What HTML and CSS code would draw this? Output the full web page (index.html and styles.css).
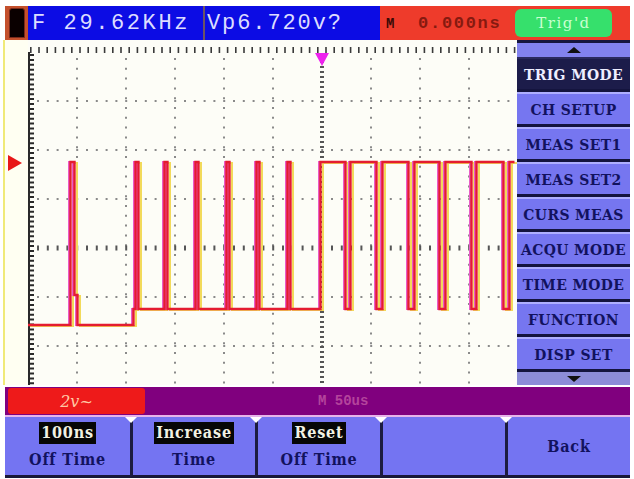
FILE: index.html
```html
<!DOCTYPE html>
<html lang="en">
<head>
  <meta charset="UTF-8" />
  <title>Scope - Trigger Mode</title>
  <link rel="stylesheet" href="styles.css">
</head>
<body>
  <div class="scope">

    <!-- top status line -->
    <header class="topbar">
      <div class="battery"><span class="cell"></span></div>
      <div class="readout freq">F 29.62KHz</div>
      <div class="readout vp">Vp6.720v?</div>
      <div class="timebase">
        <span class="delay"><b class="m">M</b>0.000ns</span>
        <span class="trig">Trig'd</span>
      </div>
    </header>

    <main class="middle">
      <div class="gutter">
        <svg class="gutter-svg" width="23" height="345" viewBox="5 40 23 345">
          <polygon points="8,155 8,171 22,163" fill="#e81818"/>
        </svg>
      </div>

      <!-- graticule + trace, drawn in screen coordinates -->
      <svg class="graticule" width="489" height="345" viewBox="28 40 489 345">
        <defs>
          <path id="trace" d="M29 326H72V163H76V296H79V326H135V310H137V163H140V310H166V163H169V310H197V163H200V310H228V163H231V310H258V163H261V310H289V163H292V310H322V163H347V310H352V163H378V310H384V163H410V310H416V163H441V310H447V163H473V310H478V163H505V310H511V163H516"/>
        </defs>
        <rect x="28" y="40" width="489" height="345" fill="#fdfdf7"/>
        <line x1="30" y1="50" x2="516" y2="50" stroke="#3a3a3a" stroke-width="6" stroke-dasharray="1.6 6.6"/>
        <line x1="29" y1="52" x2="29" y2="385" stroke="#2a2a2a" stroke-width="2"/>
        <line x1="31.5" y1="54" x2="31.5" y2="385" stroke="#2a2a2a" stroke-width="5" stroke-dasharray="2 2.9"/>
        <path d="M77 58V385M126 58V385M175 58V385M224 58V385M273 58V385M371 58V385M420 58V385M469 58V385"
              stroke="#8a8a8a" stroke-width="2" stroke-dasharray="2 7.8"/>
        <path d="M37 101H516M37 150H516M37 199H516M37 297H516M37 346H516"
              stroke="#8a8a8a" stroke-width="2" stroke-dasharray="2 7.8"/>
        <line x1="322" y1="56" x2="322" y2="385" stroke="#555" stroke-width="4" stroke-dasharray="2 3"/>
        <line x1="37" y1="248" x2="516" y2="248" stroke="#555" stroke-width="5" stroke-dasharray="2 7.8"/>

        <g fill="none" stroke-width="2" stroke-linejoin="miter">
          <use href="#trace" stroke="#f2da5a" transform="translate(1 0)"/>
          <use href="#trace" stroke="#ea5cc8" transform="translate(-3 -1)"/>
          <use href="#trace" stroke="#e41c30" stroke-width="2.4" transform="translate(-1.5 -1)"/>
        </g>
        <polygon points="315,53 329,53 322,66" fill="#ee22ee"/>
      </svg>

      <nav class="menu">
        <div class="menu-arrow"><span class="tri up"></span></div>
        <div class="menu-item active">TRIG MODE</div>
        <div class="menu-item">CH SETUP</div>
        <div class="menu-item">MEAS SET1</div>
        <div class="menu-item">MEAS SET2</div>
        <div class="menu-item">CURS MEAS</div>
        <div class="menu-item">ACQU MODE</div>
        <div class="menu-item">TIME MODE</div>
        <div class="menu-item">FUNCTION</div>
        <div class="menu-item">DISP SET</div>
        <div class="menu-arrow bottom"><span class="tri down"></span></div>
      </nav>
    </main>

    <div class="status">
      <span class="ch1">2v~</span>
      <span class="tb">M 50us</span>
    </div>

    <footer class="softkeys">
      <div class="key"><span class="hl">100ns</span><span>Off Time</span></div>
      <div class="key"><span class="hl">Increase</span><span>Time</span></div>
      <div class="key"><span class="hl">Reset</span><span>Off Time</span></div>
      <div class="key"></div>
      <div class="key single"><span>Back</span></div>
    </footer>

  </div>
</body>
</html>
```

FILE: styles.css
```css
body {
  margin: 0;
  background: #ffffff;
  width: 634px;
  height: 479px;
  overflow: hidden;
}

.scope {
  width: 625px;
  padding: 6px 0 0 5px;
  font-family: "Liberation Mono", monospace;
  font-weight: bold;
}

/* ---------- top bar ---------- */
.topbar {
  display: flex;
  height: 34px;
}

.battery {
  width: 23px;
  background: #c4502c;
  padding: 2px 3px 2px 4px;
  box-sizing: border-box;
  display: flex;
}

.battery .cell {
  flex: 1;
  background: #0a0000;
  border: 1px solid #7a2a1a;
  border-radius: 3px 3px 0 0;
}

.readout {
  background: #0c0ce4;
  color: #dcdcff;
  font-weight: normal;
  font-size: 22px;
  letter-spacing: 2.6px;
  display: flex;
  align-items: center;
  white-space: nowrap;
  overflow: hidden;
  box-sizing: border-box;
}

.freq {
  width: 175px;
  padding-left: 4px;
}

.vp {
  width: 177px;
  border-left: 2px solid #6c5464;
  padding-left: 2px;
  letter-spacing: 1.9px;
}

.timebase {
  flex: 1;
  background: #ee3b2b;
  display: flex;
  align-items: center;
}

.delay {
  color: #861a10;
  font-size: 17px;
  letter-spacing: 1.7px;
  padding-left: 6px;
}

.delay .m {
  color: #3a0a06;
  font-size: 14px;
  margin-right: 22px;
}

.trig {
  margin-left: auto;
  margin-right: 18px;
  width: 97px;
  height: 28px;
  border-radius: 6px;
  background: #36e06c;
  color: #c8ffd0;
  font-family: "DejaVu Serif", serif;
  font-weight: normal;
  font-size: 15px;
  letter-spacing: 1.5px;
  display: flex;
  align-items: center;
  justify-content: center;
}

/* ---------- scope area ---------- */
.middle {
  display: flex;
  height: 345px;
}

.gutter {
  width: 23px;
  background: #fffff2;
}

.gutter-svg,
.graticule {
  display: block;
}

.gutter-svg {
  border-left: 2px solid #f0ea78;
  margin-left: -2px;
}

.menu {
  width: 113px;
  display: flex;
  flex-direction: column;
  background: #16163e;
}

.menu-arrow {
  height: 14px;
  margin-top: 3px;
  background: #8282ee;
  display: flex;
  justify-content: center;
  align-items: center;
}

.menu-arrow.bottom {
  margin-top: 0;
  flex: 1;
  background: #8c8cd8;
}

.tri {
  width: 0;
  height: 0;
  border-left: 7px solid transparent;
  border-right: 7px solid transparent;
}

.tri.up {
  border-bottom: 6px solid #101010;
}

.tri.down {
  border-top: 6px solid #101010;
}

.menu-item {
  height: 30px;
  background: #7676f0;
  border-top: 2px solid #aeaeff;
  border-bottom: 3px solid #14143e;
  color: #12125e;
  font-family: "DejaVu Serif Condensed", "DejaVu Serif", serif;
  font-size: 15.5px;
  letter-spacing: 0.4px;
  white-space: nowrap;
  display: flex;
  align-items: center;
  justify-content: center;
}

.menu-item.active {
  background: #1c1c4a;
  border-top-color: #2a2a5e;
  color: #eeeeff;
}

/* ---------- channel / timebase strip ---------- */
.status {
  margin-top: 2px;
  height: 28px;
  background: #80007e;
  border-bottom: 2px solid #e6b4ea;
  display: flex;
  align-items: center;
}

.ch1 {
  margin-left: 3px;
  width: 137px;
  height: 26px;
  background: #ee1a1a;
  border-radius: 3px;
  color: #ffc8a4;
  font-family: "DejaVu Serif", serif;
  font-style: italic;
  font-weight: normal;
  font-size: 16px;
  display: flex;
  align-items: center;
  justify-content: center;
}

.tb {
  margin-left: 173px;
  color: #b4449c;
  font-size: 14px;
}

/* ---------- soft keys ---------- */
.softkeys {
  display: grid;
  grid-template-columns: repeat(5, 1fr);
  height: 61px;
}

.key {
  position: relative;
  background: #7474f2;
  border-bottom: 3px solid #181838;
  color: #12125e;
  font-family: "DejaVu Serif Condensed", "DejaVu Serif", serif;
  font-size: 16px;
  letter-spacing: 0.8px;
  display: flex;
  flex-direction: column;
  align-items: center;
  padding-top: 5px;
  gap: 6px;
}

.key + .key {
  border-left: 3px solid #1c1c40;
}

.key + .key::before {
  content: "";
  position: absolute;
  top: 0;
  left: -8px;
  border-left: 6px solid transparent;
  border-right: 6px solid transparent;
  border-top: 6px solid #ffffff;
}

.key .hl {
  background: #060606;
  color: #f2f2e4;
  padding: 0 2px;
  line-height: 22px;
}

.key.single {
  justify-content: center;
  padding-top: 0;
}
```
